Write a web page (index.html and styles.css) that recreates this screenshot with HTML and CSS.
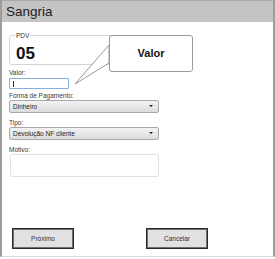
FILE: index.html
```html
<!DOCTYPE html>
<html lang="en">
<head>
    <meta charset="UTF-8">
    <meta name="viewport" content="width=device-width, initial-scale=1.0">
    <title>Sangria</title>
    <link rel="stylesheet" href="styles.css">
</head>
<body>
    <div class="window">
        <div class="titlebar">Sangria</div>

        <div class="content">
            <fieldset class="pdv">
                <legend>PDV</legend>
                <div class="pdv-num">05</div>
            </fieldset>

            <label class="field-label first" for="valor">Valor:</label>
            <div class="input-valor" id="valor"><span class="caret"></span></div>

            <label class="field-label tight">Forma de Pagamento:</label>
            <div class="select">Dinheiro<span class="arrow"></span></div>

            <label class="field-label">Tipo:</label>
            <div class="select">Devolução NF cliente<span class="arrow"></span></div>

            <label class="field-label">Motivo:</label>
            <div class="textarea"></div>
        </div>

        <div class="buttons">
            <button class="btn">Próximo</button>
            <button class="btn">Cancelar</button>
        </div>

        <!-- balloon hint pointing at the Valor input -->
        <svg class="tail" width="60" height="60" viewBox="0 0 60 60">
            <polygon points="37,10 3,49 37,28" fill="#fff" stroke="#9a9a9a" stroke-width="1"/>
        </svg>
        <div class="balloon">Valor</div>
    </div>
</body>
</html>
```

FILE: styles.css
```css
body {
    margin: 0;
    font-family: "Liberation Sans", Arial, sans-serif;
    background: #fff;
}
.window {
    position: relative;
    width: 275px;
    height: 257px;
    box-sizing: border-box;
    border-left: 2px solid #9c9c9c;
    border-right: 2px solid #9c9c9c;
    border-bottom: 1px solid #dcdcdc;
    display: flex;
    flex-direction: column;
}
.titlebar {
    height: 21px;
    line-height: 22px;
    background: #c4c4c4;
    border-top: 1px solid #a8a8a8;
    padding-left: 4px;
    font-size: 13.5px;
    color: #1e1e1e;
}
.content {
    padding: 10px 0 0 7px;
    display: flex;
    flex-direction: column;
    align-items: flex-start;
}
.pdv {
    margin: 0;
    width: 106px;
    height: 33px;
    box-sizing: border-box;
    padding: 0 0 0 6px;
    border: 1px solid #d4d4d4;
    border-radius: 3px;
}
.pdv legend {
    padding: 0 1px;
    margin-left: -1px;
    font-size: 6.5px;
    color: #333;
}
.pdv-num {
    font-size: 17px;
    font-weight: bold;
    color: #111;
    line-height: 18px;
    margin-top: 6px;
}
.field-label {
    font-size: 6.5px;
    color: #3a3a3a;
    margin-top: 6px;
    line-height: 7px;
}
.field-label.first {
    margin-top: 4px;
}
.field-label.tight {
    margin-top: 3px;
}
.input-valor {
    width: 60px;
    height: 11px;
    box-sizing: border-box;
    border: 1px solid #86aede;
    border-radius: 1px;
    margin-top: 2px;
    padding: 2px 0 0 3px;
}
.caret {
    display: block;
    width: 1px;
    height: 6px;
    background: #333;
}
.select {
    position: relative;
    width: 150px;
    height: 13px;
    box-sizing: border-box;
    margin-top: 1px;
    padding-left: 3px;
    border: 1px solid #a9a9a9;
    border-radius: 2px;
    background: linear-gradient(#f3f3f3, #dcdcdc);
    font-size: 6.5px;
    line-height: 11px;
    color: #222;
}
.arrow {
    position: absolute;
    right: 5px;
    top: 4px;
    border-left: 2px solid transparent;
    border-right: 2px solid transparent;
    border-top: 2.5px solid #222;
}
.textarea {
    width: 149px;
    height: 23px;
    box-sizing: border-box;
    margin: 1px 0 0 1px;
    border: 1px solid #e2e2e2;
    border-radius: 2px;
}
.buttons {
    margin-top: auto;
    padding: 0 0 7px 10px;
    display: flex;
    gap: 72px;
}
.btn {
    width: 62px;
    height: 21px;
    border: 1px solid #2a2a2a;
    box-shadow: inset 0 0 0 1px #6e6e6e;
    border-radius: 0;
    background: #e1e1e1;
    font-family: "Liberation Sans", Arial, sans-serif;
    font-size: 6.5px;
    color: #333;
    padding: 0;
}
.balloon {
    position: absolute;
    left: 107px;
    top: 35px;
    width: 84px;
    height: 37px;
    box-sizing: border-box;
    border: 1px solid #9a9a9a;
    border-radius: 3px;
    background: #fff;
    font-size: 11px;
    font-weight: bold;
    color: #111;
    text-align: center;
    line-height: 35px;
}
.tail {
    position: absolute;
    left: 70px;
    top: 35px;
}
```
